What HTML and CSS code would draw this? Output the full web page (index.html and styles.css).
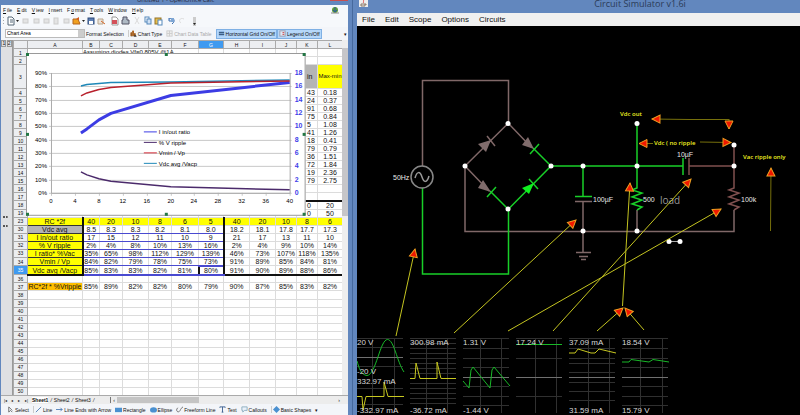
FILE: index.html
```html
<!DOCTYPE html>
<html lang="en">
<head>
    <meta charset="UTF-8">
    <meta name="viewport" content="width=device-width, initial-scale=1.0">
    <title>Circuit Simulator</title>
    <link rel="stylesheet" href="styles.css">
</head>
<body>
    <section class="calc">
        <div class="calc-title"><span>Untitled 1 - OpenOffice Calc</span><i class="close"></i></div>
        <nav class="calc-menu">
            <button><u>F</u>ile</button>
            <button><u>E</u>dit</button>
            <button><u>V</u>iew</button>
            <button><u>I</u>nsert</button>
            <button>F<u>o</u>rmat</button>
            <button><u>T</u>ools</button>
            <button><u>W</u>indow</button>
            <button><u>H</u>elp</button>
            <svg class="update" viewBox="0 0 8 8"><circle cx="4" cy="4" r="3" fill="#5b9a3c"/><path d="M4 1v4M2 4l2 2 2-2" stroke="#2c5c9a" fill="none"/><path d="M0 7h8" stroke="#888"/></svg>
        </nav>
        <div class="toolbar">
            <svg viewBox="0 0 200 12" class="icons">
                <g fill="#aaa"><rect x="2" y="2" width="1" height="1"/><rect x="2" y="5" width="1" height="1"/><rect x="2" y="8" width="1" height="1"/></g>
                <path d="M7 2h4l2 2v6H7z" fill="#fff" stroke="#567"/><path d="M9 5h3M9 7h3" stroke="#567"/>
                <path d="M15 5h3l-1.5 2z" fill="#222"/>
                <g fill="#e4e4e4" stroke="#ccc"><rect x="22" y="4" width="5" height="4"/><rect x="33" y="4" width="5" height="4"/><rect x="43" y="4" width="5" height="4"/><rect x="53" y="3" width="4" height="6"/><rect x="63" y="4" width="5" height="4"/></g>
                <path d="M72 4h5l2 5h-7z" fill="#f0a020" stroke="#b5651d"/><path d="M75 4l3-2v3" fill="#d55b20"/>
                <path d="M81 5h3l-1.500 2z" fill="#222"/>
                <rect x="87" y="3" width="6" height="6" fill="#5d7fb5" stroke="#2c4a7c"/><rect x="88" y="6" width="4" height="3" fill="#fff"/>
                <path d="M97 4h5v5h-5z" fill="#e9e4dc" stroke="#b9a58c"/><path d="M100 6l4 3" stroke="#d5672a"/>
                <path d="M111 2h4l2 2v6h-6z" fill="#fff" stroke="#999"/><rect x="111" y="5" width="5" height="4" fill="#d3505a"/>
                <path d="M122 2h4v3h2v4h-7V5h1z" fill="#aeb9c4" stroke="#556"/>
                <path d="M134 2l4 7M138 2l-4 7" stroke="#ddd"/>
                <rect x="144" y="2" width="4" height="5" fill="#fff" stroke="#58b"/><rect x="146" y="4" width="4" height="5" fill="#cfe0f4" stroke="#58b"/>
                <rect x="154" y="3" width="6" height="6" fill="#e7bd49" stroke="#937328"/><rect x="157" y="5" width="4" height="5" fill="#fff" stroke="#58b"/>
                <path d="M168 4c5-2 7 2 3 5M168 3v3h3" fill="none" stroke="#3a6fb0"/><rect x="170" y="3" width="3" height="4" fill="#7ca5d4"/>
                <path d="M183 4c-4-2-6 2-3 4" fill="none" stroke="#ddd"/>
                <rect x="192" y="2" width="3" height="9" fill="#ccc"/><path d="M192 8h3l-1.500 2z" fill="#222"/>
            </svg>
        </div>
        <div class="toolbar chart-bar">
            <select class="area" aria-label="Chart element"><option>Chart Area</option></select>
            <button class="format">Format Selection</button>
            <button class="sep"><svg viewBox="0 0 8 8"><path d="M1 7V3h1v4M3 7V1h1v6M5 7V4h1v3" stroke="#b5651d"/><path d="M5 5l3 2-3 1z" fill="#333"/></svg>Chart Type</button>
            <button class="off"><svg viewBox="0 0 8 8"><rect x="1" y="1" width="6" height="6" fill="#eee" stroke="#ccc"/><path d="M1 4h6M4 1v6" stroke="#ccc"/></svg>Chart Data Table</button>
            <button class="on"><svg viewBox="0 0 8 8"><rect x="1" y="1" width="6" height="6" fill="#8fb7e3"/><path d="M1 3h6M1 5h6" stroke="#246"/></svg>Horizontal Grid On/Off</button>
            <button class="on"><svg viewBox="0 0 8 8"><rect x="1" y="1" width="6" height="6" fill="#dfe9f5" stroke="#99a"/><path d="M4 3h2M4 5h2" stroke="#c33"/></svg>Legend On/Off</button>
            <span class="more">&#9662;</span>
        </div>

        <div class="sheet">
            <div class="outline"><b></b><span>1</span><span>2</span></div>
            <div class="grid-wrap">
                <table class="cells">
                    <colgroup>
                        <col class="c-num"><col class="c-a"><col class="c-b"><col class="c-c"><col class="c-d"><col class="c-e"><col class="c-f"><col class="c-g"><col class="c-h"><col class="c-i"><col class="c-j"><col class="c-k"><col class="c-l">
                    </colgroup>
                    <thead>
                        <tr><th></th><th>A</th><th>B</th><th>C</th><th>D</th><th>E</th><th>F</th><th class="picked">G</th><th>H</th><th>I</th><th>J</th><th>K</th><th>L</th></tr>
                    </thead>
                    <tbody id="rows"></tbody>
                </table>
                <svg class="chart" viewBox="27 53 280 163">
                    <rect x="27" y="53" width="280" height="163" fill="#fff"/>
                    <path d="M27.500 216V53.500H306.500V215.500H27" fill="none" stroke="#999"/>
                    <g id="gridlines" stroke="#c8c8c8"></g>
                    <path d="M52.500 73V193.500H291.500V73" fill="none" stroke="#aaa"/>
                    <g id="ticks"></g>
                    <g fill="none" stroke-linejoin="round">
                        <path d="M82 172L88 175 100 179 112 181.500 172 187 291 190" stroke="#4b2a6b" stroke-width="1.500"/>
                        <path d="M82 133L88 129 100 120 112 113.500 172 95.500 291 82.500" stroke="#3c3ce4" stroke-width="3"/>
                        <path d="M82 86L88 84.500 112 82.500 172 82 291 80" stroke="#1e88b8" stroke-width="1.500"/>
                        <path d="M82 96L88 93 100 89.500 112 87.500 172 83 291 81" stroke="#b8202c" stroke-width="1.500"/>
                    </g>
                    <g stroke-width="1">
                        <path d="M145 132H158" stroke="#3c3ce4"/>
                        <path d="M145 142.500H158" stroke="#4b2a6b"/>
                        <path d="M145 153H158" stroke="#d8303c"/>
                        <path d="M145 163.500H158" stroke="#1e88b8"/>
                    </g>
                    <g class="legend">
                        <text x="160" y="134">I in/out ratio</text>
                        <text x="160" y="145">% V ripple</text>
                        <text x="160" y="155">Vmin / Vp</text>
                        <text x="160" y="166">Vdc avg /Vacp</text>
                    </g>
                    <g fill="#274" ><rect x="27" y="53" width="3" height="3"/><rect x="166" y="53" width="3" height="3"/><rect x="304" y="53" width="3" height="3"/><rect x="27" y="133" width="3" height="3"/><rect x="304" y="133" width="3" height="3"/><rect x="27" y="213" width="3" height="3"/><rect x="166" y="213" width="3" height="3"/><rect x="304" y="213" width="3" height="3"/></g>
                </svg>
            </div>
            <div class="vscroll"><i></i></div>
        </div>

        <div class="tabs">
            <span class="nav">|&#9666;</span><span class="nav">&#9666;</span><span class="nav">&#9656;</span><span class="nav">&#9656;|</span>
            <button class="current">Sheet1</button><em>/</em><button>Sheet2</button><em>/</em><button>Sheet3</button><em>/</em>
            <div class="hscroll"><span>&lsaquo;</span><i></i><span class="end">&rsaquo;</span></div>
        </div>
        <div class="draw-bar">
            <button><svg viewBox="0 0 8 8"><path d="M2 1v6l2-2 2 2M2 1l4 4" fill="none" stroke="#666"/></svg>Select</button>
            <button class="sep"><svg viewBox="0 0 8 8"><path d="M1 7L7 1" stroke="#4a7ab5"/></svg>Line</button>
            <button><svg viewBox="0 0 8 8"><path d="M0 4h7M5 2l2 2-2 2" fill="none" stroke="#4a7ab5"/></svg>Line Ends with Arrow</button>
            <button><svg viewBox="0 0 8 8"><rect x="0" y="2" width="8" height="5" fill="#4a90d0"/></svg>Rectangle</button>
            <button><svg viewBox="0 0 8 8"><ellipse cx="4" cy="4.500" rx="4" ry="3" fill="#4a90d0"/></svg>Ellipse</button>
            <button><svg viewBox="0 0 8 8"><path d="M2 2c-3 3 0 6 2 4s0-2 4-5" fill="none" stroke="#666"/></svg>Freeform Line</button>
            <button><svg viewBox="0 0 8 8"><path d="M1 2V1h6v1M4 1v6M3 7h2" fill="none" stroke="#345a8c"/></svg>Text</button>
            <button><svg viewBox="0 0 8 8"><path d="M1 1h6v4H4L2 7V5H1z" fill="#e8f1fa" stroke="#8ab"/></svg>Callouts</button>
            <button class="sep"><svg viewBox="0 0 8 8"><path d="M4 0l4 4-4 4-4-4z" fill="#4a90d0"/></svg>Basic Shapes</button>
            <span class="drop">&#9662;</span>
        </div>
    </section>

    <section class="sim">
        <div class="sim-title">
            <svg viewBox="0 0 9 7"><rect width="9" height="7" fill="#eee"/><path d="M4 0c2 1-1 2 1 3" stroke="#d55" fill="none"/><path d="M2 4h4v2H2zM6 4h1v1" stroke="#876" fill="none"/></svg>
            <h1>Circuit Simulator v1.6i</h1>
        </div>
        <nav class="sim-menu">
            <button>File</button>
            <button>Edit</button>
            <button>Scope</button>
            <button>Options</button>
            <button>Circuits</button>
        </nav>
        <svg class="circuit" viewBox="357 26 443 389" preserveAspectRatio="xMinYMin meet">
            <defs>
                <marker id="head" markerUnits="userSpaceOnUse" markerWidth="12" markerHeight="12" refX="9" refY="5" orient="auto-start-reverse">
                    <path d="M1 1L9 5 1 9z" fill="#f01800" stroke="#f0a020"/>
                </marker>
            </defs>

            <!-- wires -->
            <g fill="none" stroke-width="1.500" stroke="#806868">
                <path d="M422.500 166V80.500H508.500V123L465 166V231.500H734V210"/>
                <path d="M508 123L531 147M465 166L489 191"/>
                <path d="M637 210V231M583 201V252M576 252.500h15M579 256.500h9M581 259.500h5M575 201.500h17"/>
                <path d="M689 158v17M689 166H734M734 145V188l-5 2 10 3-10 4 10 3-10 4 10 3-5 3" stroke="#80504f"/>
            </g>
            <g fill="none" stroke-width="1.500" stroke="#18cf28">
                <path d="M422.500 188V274H508.500V209L551 166H683M683 158v17"/>
                <path d="M533 148L551 166M490 191L508 209"/>
                <path d="M637 123V188l-5 2 10 3-10 4 10 3-10 4 10 3-5 3"/>
                <path d="M583 166V196M575 196.500h17"/>
                <path d="M539 144L530 154M496 187L487 197M529 179L538 189"/>
            </g>
            <path d="M487 136L495 146" stroke="#806868" stroke-width="1.500"/>
            <path d="M478 144L491 140 486 152zM522 145L534 149 528 137zM478 188L483 180 491 192z" fill="#806c6c"/>
            <path d="M522 188L534 183 529 194z" fill="#10f020"/>
            <circle cx="422" cy="177" r="11" fill="none" stroke="#888" stroke-width="1.500"/>
            <path d="M415 178c2-7 5-7 7-1s5 6 7-1" fill="none" stroke="#999" stroke-width="1.500"/>
            <path d="M669 241.500H680" stroke="#aaa"/>
            <g fill="#fff">
                <circle cx="508" cy="123.500" r="2.500"/><circle cx="465" cy="166" r="2.500"/><circle cx="551" cy="166" r="2.500"/><circle cx="508" cy="209" r="2.500"/>
                <circle cx="583" cy="166" r="2.500"/><circle cx="637" cy="166" r="2.500"/><circle cx="734" cy="166" r="2.500"/><circle cx="637" cy="123.500" r="2.500"/>
                <circle cx="734" cy="145" r="2.500"/><circle cx="583" cy="231" r="2.500"/><circle cx="637" cy="231" r="2.500"/>
                <circle cx="669" cy="241.500" r="2.500"/><circle cx="680" cy="241.500" r="2.500"/>
            </g>
            <g class="value">
                <text x="393" y="180">50Hz</text>
                <text x="593" y="202">100µF</text>
                <text x="643" y="202">500</text>
                <text x="741" y="202">100k</text>
                <text x="677" y="157">10µF</text>
            </g>
            <text class="load" x="660" y="204">load</text>

            <!-- annotations -->
            <g class="note">
                <text x="620" y="116">Vdc out</text>
                <text x="654" y="145">Vdc ( no ripple</text>
                <text x="743" y="159">Vac ripple only</text>
            </g>
            <g fill="none" stroke="#77700c">
                <path d="M729 119.500L690 119.500 652 119" marker-end="url(#head)"/>
                <path d="M729 119V129" marker-end="url(#head)"/>
                <path d="M653 143.500L639 143.500" marker-end="url(#head)"/>
                <path d="M700 142L731 142.500" marker-end="url(#head)"/>
                <path d="M770.500 231L771 168" marker-end="url(#head)"/>
            </g>
            <g fill="none" stroke="#c4c420">
                <path d="M396 336L415 249" marker-end="url(#head)"/>
                <path d="M454 333L576 220" marker-end="url(#head)"/>
                <path d="M508 331L721 209" marker-end="url(#head)"/>
                <path d="M553 331L691 179" marker-end="url(#head)"/>
                <path d="M622.500 306L630 183" marker-end="url(#head)"/>
                <path d="M597 331L623 308" marker-end="url(#head)"/>
                <path d="M644 330L625 308" marker-end="url(#head)"/>
            </g>

            <!-- scopes -->
            <g fill="none" stroke="#303030">
                <path d="M357 338.500h46M357 347.500h46M357 366.500h46M357 388.500h46M357 404.500h46M372.500 338v75M394.500 338v75"/>
                <path d="M410 338.500h46M410 343.500h46M410 348.500h46M410 353.500h46M410 358.500h46M410 363.500h46M410 368.500h46M410 373.500h46M410 383.500h46M410 388.500h46M410 393.500h46M410 398.500h46M410 403.500h46M426.500 338v75M447.500 338v75"/>
                <path d="M463 338.500h46M463 348.500h46M463 358.500h46M463 367.500h46M463 386.500h46M463 396.500h46M463 405.500h46M480.500 338v75M501.500 338v75"/>
                <path d="M516 338.500h46M516 358.500h46M516 396.500h46M535.500 338v75M556.500 338v75"/>
                <path d="M569 338.500h46M569 348.500h46M569 358.500h46M569 363.500h46M569 372.500h46M569 382.500h46M569 391.500h46M569 400.500h46M588.500 338v75M609.500 338v75"/>
                <path d="M622 338.500h46M622 348.500h46M622 358.500h46M622 367.500h46M622 386.500h46M622 396.500h46M622 405.500h46M640.500 338v75M662.500 338v75"/>
            </g>
            <path d="M357 357.500h46M463 377.500h46M516 377.500h46M569 377.500h46M622 377.500h46" stroke="#707070"/>
            <g fill="none" stroke="#18b828">
                <path d="M357 361C359 368 361 375 367 375.500C376 375 380 339.500 387.500 339.500C394 339.500 397 362 404 372"/>
                <path d="M463 381L469 388 471 370 473 367 490 388 492 370 494 367 510 386"/>
                <path d="M516 344.500h46"/>
                <path d="M622 362L629 362 631 359.500 649 362 653 359.500 669 362"/>
            </g>
            <g fill="none" stroke="#c8c820">
                <path d="M357 396.500H362L363 410 366 396.500H384V382L388 396.500H404"/>
                <path d="M410 378.500H415L416 363 420 378.500H437V362L441 378.500H456"/>
                <path d="M569 353H575L578 349 591 353H595L599 349 616 353"/>
            </g>
            <g class="reading">
                <text x="357" y="345">20 V</text><text x="357" y="374">-20 V</text><text x="357" y="384">332.97 mA</text><text x="357" y="413">-332.97 mA</text>
                <text x="410" y="345">300.98 mA</text><text x="410" y="413">-36.72 mA</text>
                <text x="463" y="345">1.31 V</text><text x="463" y="413">-1.44 V</text>
                <text x="516" y="345">17.24 V</text>
                <text x="569" y="345">37.09 mA</text><text x="569" y="413">31.59 mA</text>
                <text x="622" y="345">18.54 V</text><text x="622" y="413">15.79 V</text>
            </g>
        </svg>
    </section>

    <script>
        // cell values per row number, columns A to L
        const values = {
            1: ['', 'Assuming diodes Vf=0.805V @1A'],
            3: ['', '', '', '', '', '', '', '', '', '', 'in', 'Max-min'],
            23: ['RC *2f', 40, 20, 10, 8, 6, 5, 40, 20, 10, 8, 6],
            30: ['Vdc avg', '8.5', '8.3', '8.3', '8.2', '8.1', '8.0', '18.2', '18.1', '17.8', '17.7', '17.3'],
            31: ['I in/out ratio', 17, 15, 12, 11, 10, 9, 21, 17, 13, 11, 10],
            32: ['% V ripple', '2%', '4%', '8%', '10%', '13%', '16%', '2%', '4%', '9%', '10%', '14%'],
            33: ['I ratio* %Vac', '35%', '65%', '98%', '112%', '129%', '139%', '46%', '73%', '107%', '118%', '135%'],
            34: ['Vmin / Vp', '84%', '82%', '79%', '78%', '75%', '73%', '91%', '89%', '85%', '84%', '81%'],
            35: ['Vdc avg /Vacp', '85%', '83%', '83%', '82%', '81%', '80%', '91%', '90%', '89%', '88%', '86%'],
            37: ['RC*2f * %Vripple', '85%', '89%', '82%', '82%', '80%', '79%', '90%', '87%', '85%', '83%', '82%']
        };
        const minCol = ['43', '24', '91', '75', '5', '41', '18', '79', '36', '72', '19', '79'];
        const diffCol = ['0.18', '0.37', '0.68', '0.84', '1.08', '1.26', '0.41', '0.79', '1.51', '1.84', '2.36', '2.75'];
        for (let i = 0; i < 12; i++) {
            values[i + 4] = Array(10).fill('').concat(minCol[i], diffCol[i]);
        }
        values[18] = Array(10).fill('').concat('0', '20');
        values[19] = Array(10).fill('').concat('0', '50');

        const numbers = [];
        for (let n = 1; n <= 50; n++) {
            if (n < 20 || n === 23 || n > 29) numbers.push(n);
        }
        document.getElementById('rows').innerHTML = numbers.map(n => {
            const row = values[n] || [];
            const group = n < 20 ? ' behind' : n > 29 && n < 36 ? ' block' : '';
            let cells = '';
            for (let c = 0; c < 12; c++) {
                cells += `<td>${row[c] === undefined ? '' : row[c]}</td>`;
            }
            return `<tr class="r${n}${group}"><th>${n}</th>${cells}</tr>`;
        }).join('');

        // chart axes
        let lines = '';
        let labels = '';
        for (let i = 0; i < 10; i++) {
            const y = Math.round(193 - i * 40 / 3);
            lines += `<path d="M50 ${y + 0.5}H293"/>`;
            labels += `<text class="left" x="48" y="${y + 2}">${i * 10}%</text><text class="right" x="296" y="${y + 2}">${i * 2}</text>`;
        }
        for (let i = 0; i < 11; i++) {
            const x = Math.round(52 + i * 23.9);
            lines += `<path d="M${x + 0.5} 193v3"/>`;
            labels += `<text class="bottom" x="${x}" y="203">${i * 4}</text>`;
        }
        document.getElementById('gridlines').innerHTML = lines;
        document.getElementById('ticks').innerHTML = labels;
    </script>
</body>
</html>
```
FILE: styles.css
```css
* {
    box-sizing: border-box;
}
body {
    margin: 0;
    height: 100vh;
    overflow: hidden;
    display: grid;
    grid-template-columns: 353fr 447fr;
    background-color: #6287be;
    font-family: "Liberation Sans", Arial, sans-serif;
    color: #111;
}
button {
    display: flex;
    align-items: center;
    gap: 1px;
    padding: 0;
    border: none;
    background: none;
    font: inherit;
    color: inherit;
    white-space: nowrap;
}
button svg {
    width: 7px;
    height: 7px;
}

/* spreadsheet window */
.calc {
    display: flex;
    flex-direction: column;
    min-width: 0;
    height: 100vh;
    padding: 0 4px 0 1px;
    border-right: 1px solid #46699d;
    font-size: 5px;
}
.calc-title {
    height: 5px;
    flex: none;
    display: flex;
    justify-content: space-between;
    overflow: hidden;
    padding-left: 136px;
    font-family: "Open Sans", sans-serif;
    font-size: 6px;
    line-height: 1px;
    color: #223;
}
.close {
    width: 18px;
    height: 1px;
    background-color: #c75050;
}
.calc-menu {
    height: 10px;
    flex: none;
    display: flex;
    align-items: center;
    gap: 5px;
    padding: 0 9px 0 2px;
    background-color: #f6f8fb;
}
.update {
    width: 8px;
    height: 8px;
    margin-left: auto;
}
.toolbar {
    height: 12px;
    flex: none;
    background-color: #f6f8fb;
}
.icons {
    display: block;
    width: 200px;
    height: 12px;
}
.chart-bar {
    height: 13px;
    display: flex;
    align-items: center;
    padding-left: 4px;
    background-color: #f3f5f9;
}
.area {
    appearance: none;
    width: 80px;
    height: 9px;
    padding: 0 1px;
    border: 1px solid #bbb;
    border-radius: 0;
    background: linear-gradient(#ccc, #ccc) right / 6px 100% no-repeat #fff;
    font: inherit;
    line-height: 7px;
}
.format {
    margin: 0 4px 0 1px;
}
.sep {
    border-left: 1px solid #ccc;
    padding-left: 1px;
}
.off {
    color: #aaa;
    margin: 0 4px;
}
.on {
    height: 10px;
    padding: 0 1px;
    border: 1px solid #7fb0e4;
    background-color: #b5d7fa;
}
.more {
    margin-left: auto;
    width: 4px;
}

.sheet {
    flex: 1;
    min-height: 0;
    display: flex;
    background-color: #fff;
}
.outline {
    width: 12px;
    flex: none;
    display: flex;
    flex-wrap: wrap;
    align-content: flex-start;
    justify-content: space-evenly;
    position: relative;
    background-color: #dfe0e3;
    border-right: 1px solid #999;
}
.outline span {
    border: 1px solid #999;
    line-height: 5px;
}
.outline b {
    position: absolute;
    top: 176px;
    left: 2px;
    width: 5px;
    height: 11px;
    border: 1px dotted #555;
    border-width: 2px 0;
}
.grid-wrap {
    flex: 1;
    position: relative;
    min-width: 0;
    overflow: hidden;
}
.cells {
    width: 100%;
    height: 356px;
    table-layout: fixed;
    border-collapse: collapse;
    font-size: 7px;
    line-height: 7px;
}
.c-num { width: 14px; }
.c-a { width: 55px; }
.c-b { width: 17px; }
.c-c, .c-e { width: 23px; }
.c-d, .c-h, .c-i { width: 26px; }
.c-f { width: 27px; }
.c-g, .c-l { width: 25px; }
.c-j, .c-k { width: 21px; }
.cells tr {
    height: 8px;
}
.cells th,
.cells td {
    padding: 0;
    border: 1px solid #dcdcdc;
    text-align: center;
    white-space: nowrap;
}
.cells th {
    border-color: #aaa;
    background-color: #eceef1;
    font-size: 5px;
    line-height: 6px;
    font-weight: normal;
}
.cells .picked,
.cells .r35 th {
    background-color: #3f9af0;
    color: #fff;
}
.cells .r3 {
    height: 24px;
}
.cells .r1 td:nth-child(3) {
    text-align: left;
    font-size: 6px;
}
.cells .behind td:nth-child(12) {
    padding-left: 10px;
    text-align: left;
}
.r3 td:nth-child(12),
.cells .r30 td:nth-child(2) {
    background-color: #b4b4b4;
}
.r3 td:nth-child(13) {
    font-size: 6px;
}
.r3 td:nth-child(13),
.r23 td,
.block td:nth-child(2) {
    background-color: #ff0;
}
.cells .r18 td {
    border-top: 2px solid #111;
}
.r23 td:nth-child(2),
.block td:nth-child(2) {
    border-color: #333;
}
.cells .block td:nth-child(n+3):nth-child(-n+8) {
    border-top-color: #4a4ad0;
    border-bottom-color: #4a4ad0;
}
.cells .r23 td:nth-child(2),
.cells .block td:nth-child(2) {
    border-right: 2px solid #111;
}
.cells .r23 td:nth-child(8),
.cells .block td:nth-child(8) {
    border-right: 2px solid #111;
}
.cells .r35 td:nth-child(n+2) {
    border-bottom: 2px solid #111;
}
.cells .r35 td:nth-child(8) {
    border: 2px solid #111;
}
.r37 td:nth-child(2) {
    background-color: #ffbf00;
}
.chart {
    position: absolute;
    left: 13px;
    top: 13px;
    width: 85%;
}
.chart text {
    font-size: 6px;
}
.chart .left {
    text-anchor: end;
}
.chart .bottom {
    text-anchor: middle;
}
.chart .right {
    font-size: 7px;
    font-weight: bold;
    fill: #4040e8;
}
.vscroll {
    width: 6px;
    flex: none;
    padding-top: 8px;
    background-color: #eee;
}
.vscroll i {
    display: block;
    height: 168px;
    background-color: #c6c6c9;
}

.tabs {
    height: 9px;
    flex: none;
    display: flex;
    align-items: center;
    gap: 2px;
    padding-left: 3px;
    background-color: #ececec;
    border-top: 1px solid #aaa;
}
.nav {
    width: 5px;
    font-size: 4px;
}
.current {
    font-weight: bold;
    background-color: #fff;
}
.hscroll {
    flex: 1;
    display: flex;
    align-items: center;
    gap: 2px;
    margin-left: 14px;
    border-left: 1px solid #777;
    padding: 0 8px 0 2px;
}
.hscroll i {
    width: 36%;
    height: 6px;
    background-color: #c4c4c4;
}
.hscroll .end {
    margin-left: auto;
}
.draw-bar {
    height: 11px;
    flex: none;
    display: flex;
    align-items: center;
    gap: 4px;
    padding-left: 6px;
    background-color: #f3f5f9;
}

/* simulator window */
.sim {
    display: flex;
    flex-direction: column;
    min-width: 0;
    height: 100vh;
    padding-left: 4px;
}
.sim-title {
    height: 13px;
    flex: none;
    display: flex;
    align-items: flex-start;
    overflow: hidden;
}
.sim-title svg {
    width: 9px;
    height: 7px;
    margin-left: 2px;
}
.sim-title h1 {
    flex: 1;
    margin: 0;
    padding-left: 112px;
    text-align: center;
    font: 9px/8px "Open Sans", sans-serif;
    color: #2b3c58;
}
.sim-menu {
    height: 13px;
    flex: none;
    display: flex;
    align-items: center;
    gap: 10px;
    padding-left: 5px;
    background-color: #f0f0f0;
    font-size: 8px;
}
.circuit {
    flex: 1;
    min-height: 0;
    width: 100%;
    background-color: #000;
}
.value {
    font-size: 7px;
    fill: #e8e8e8;
}
.load {
    font-family: "Open Sans", sans-serif;
    font-size: 10px;
    fill: #999;
}
.note {
    font-family: "Open Sans", sans-serif;
    font-size: 6px;
    font-weight: 600;
    fill: #f0f020;
}
.reading {
    font-size: 8px;
    fill: #d8d8d8;
}
```
